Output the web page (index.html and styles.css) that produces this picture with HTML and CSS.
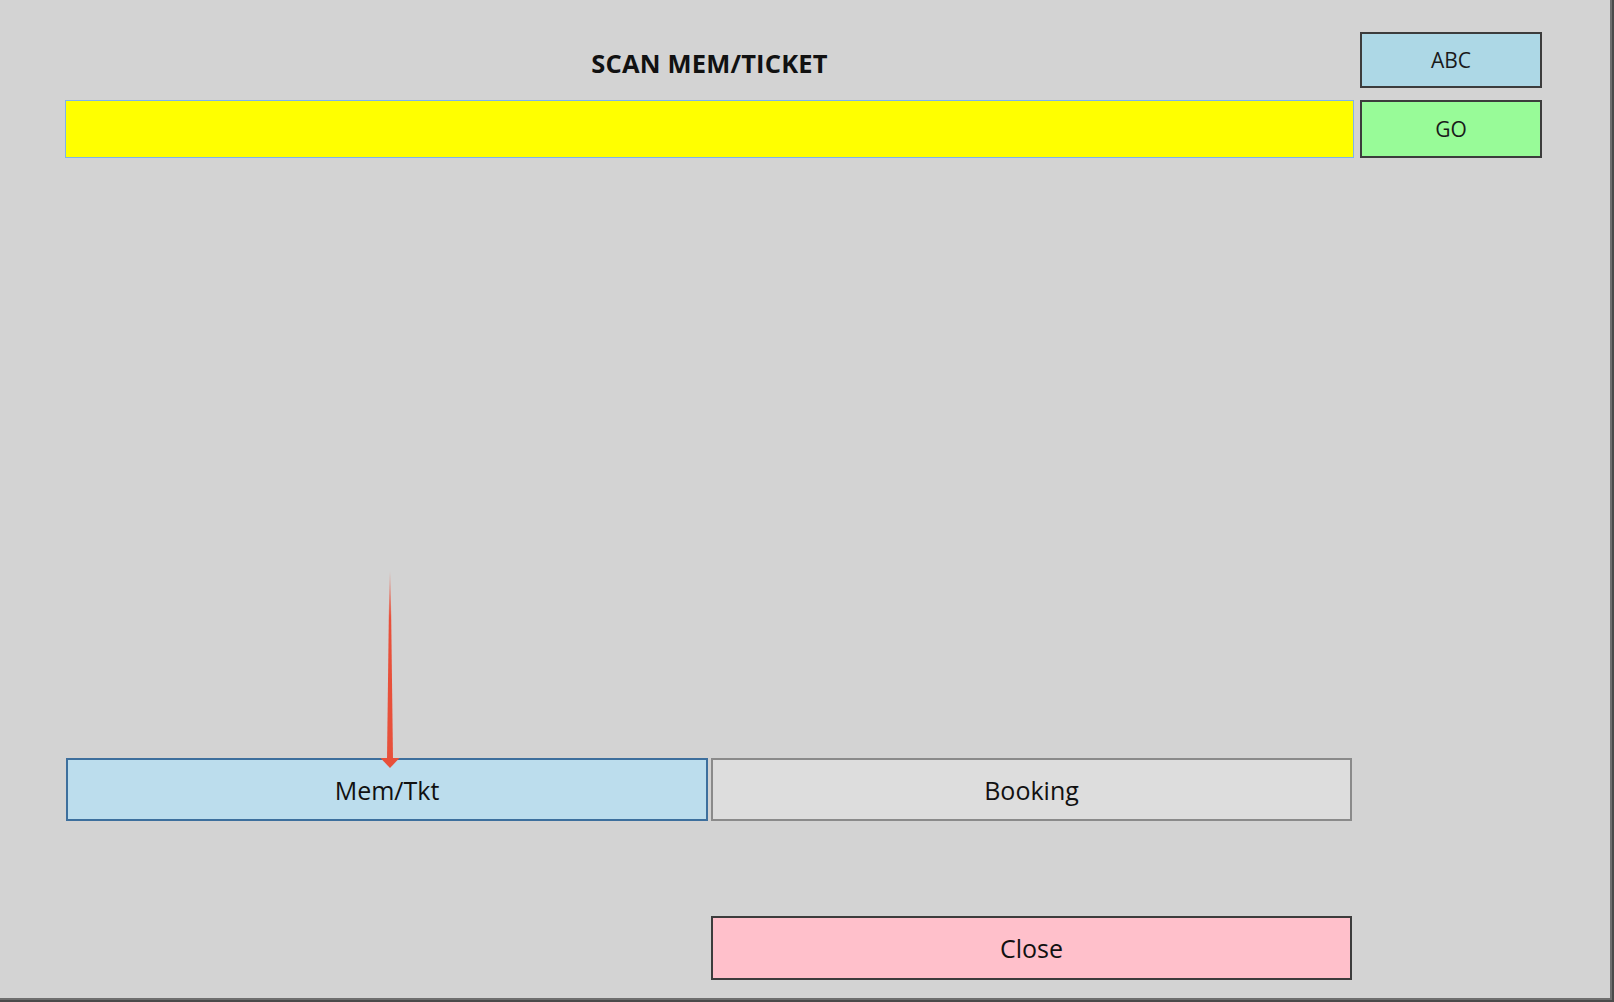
FILE: index.html
```html
<!DOCTYPE html>
<html>
<head>
    <link rel="stylesheet" href="styles.css">
</head>
<body>
    <div class="window">
        <div class="scan-panel">
            <h1 class="scan-title">SCAN MEM/TICKET</h1>
            <button class="side-btn abc-btn">ABC</button>
            <input type="text" class="scan-input">
            <button class="side-btn go-btn">GO</button>
        </div>

        <div class="mode-panel">
            <div class="mode-cell">
                <button class="mode-btn mem-btn">Mem/Tkt</button>
                <!-- annotation arrow -->
                <svg class="pointer" width="20" height="197" viewBox="0 0 20 197">
                    <defs>
                        <linearGradient id="fade" x1="0" y1="0" x2="0" y2="1">
                            <stop offset="0" stop-color="#e8503a" stop-opacity="0"/>
                            <stop offset="0.25" stop-color="#e8503a"/>
                            <stop offset="1" stop-color="#e8503a"/>
                        </linearGradient>
                    </defs>
                    <path d="M9.4 0 L10.6 0 L13 188 L7 188 Z" fill="url(#fade)"/>
                    <path d="M0.5 187 L19.5 187 L10 197 Z" fill="#e8503a"/>
                </svg>
            </div>
            <button class="mode-btn booking-btn">Booking</button>
            <button class="mode-btn close-btn">Close</button>
        </div>
    </div>
</body>
</html>
```

FILE: styles.css
```css
body {
    margin: 0;
    background-color: #4a4a4a;
    font-family: "Open Sans", "Noto Sans", sans-serif;
    color: #111;
}

.window {
    width: 1612px;
    height: 1000px;
    box-sizing: border-box;
    background-color: #d3d3d3;
    border-right: 2px solid #6e6e6e;
    border-bottom: 2px solid #6e6e6e;
    padding: 32px 0 0 65px;
}

.scan-panel {
    display: grid;
    grid-template-columns: 1289px 182px;
    grid-template-rows: 56px 58px;
    column-gap: 6px;
    row-gap: 12px;
}

.scan-title {
    margin: 0;
    align-self: center;
    text-align: center;
    font-size: 25.5px;
    font-weight: 700;
    letter-spacing: 0.2px;
    padding-top: 6px;
}

.scan-input {
    margin: 0;
    padding: 0;
    box-sizing: border-box;
    height: 58px;
    background-color: #ffff00;
    border: 1px solid #7eb4ea;
    outline: none;
}

.side-btn {
    margin: 0;
    font-family: inherit;
    font-size: 21px;
    color: #1a1a1a;
    border: 2px solid #3c3c3c;
    border-radius: 0;
}

.abc-btn {
    background-color: #add8e6;
}

.go-btn {
    background-color: #98fb98;
}

.mode-panel {
    display: grid;
    grid-template-columns: 642px 641px;
    grid-template-rows: 63px 64px;
    column-gap: 3px;
    row-gap: 95px;
    margin: 600px 0 0 1px;
}

.mode-cell {
    position: relative;
    display: flex;
}

.mode-btn {
    margin: 0;
    width: 100%;
    font-family: inherit;
    font-size: 25px;
    color: #111;
    border-radius: 0;
}

.mem-btn {
    background-color: #bcdded;
    border: 2px solid #3d6f9d;
}

.booking-btn {
    background-color: #dddddd;
    border: 2px solid #8a8a8a;
}

.close-btn {
    grid-column: 2;
    background-color: #ffc0cb;
    border: 2px solid #3c3c3c;
}

.pointer {
    position: absolute;
    left: 314px;
    top: -187px;
}
```
